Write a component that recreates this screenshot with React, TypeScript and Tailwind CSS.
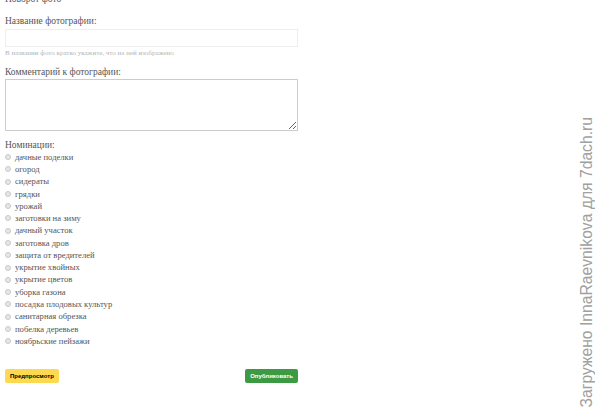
import React from 'react';

const nominations = [
  'дачные поделки',
  'огород',
  'сидераты',
  'грядки',
  'урожай',
  'заготовки на зиму',
  'дачный участок',
  'заготовка дров',
  'защита от вредителей',
  'укрытие хвойных',
  'укрытие цветов',
  'уборка газона',
  'посадка плодовых культур',
  'санитарная обрезка',
  'побелка деревьев',
  'ноябрьские пейзажи',
];

const serif = { fontFamily: '"Liberation Serif", "DejaVu Serif", serif' };
const sans = { fontFamily: '"Liberation Sans", Arial, sans-serif' };

export default function App() {
  return (
    <div className="relative w-[600px] h-[418px] overflow-hidden bg-white text-[#555]" style={serif}>
      <div className="w-[293px] ml-[5px] -mt-[7px] flex flex-col">
        <div className="text-[9.5px] leading-[12px]">Поворот фото</div>

        <label className="mt-[10px] text-[9.5px] leading-[12px]">Название фотографии:</label>
        <input className="mt-[2px] h-[18px] w-full border border-[#eeeeee] outline-none" />
        <div className="mt-[2px] text-[7px] leading-[9px] text-[#b5b5b5]">
          В названии фото кратко укажите, что на ней изображено
        </div>

        <label className="mt-[8px] text-[9.5px] leading-[12px]">Комментарий к фотографии:</label>
        <textarea className="mt-[1px] h-[52px] w-full border border-[#cccccc] outline-none resize-y" />

        <div className="mt-[8px] text-[9.5px] leading-[12px]">Номинации:</div>
        <div className="flex flex-col">
          {nominations.map((n) => (
            <label key={n} className="flex items-center h-[12.27px] text-[8.6px]">
              <span className="w-[6px] h-[6px] rounded-full border border-[#c8c8c8] bg-[#e6e6e6] mr-[4px] shrink-0" />
              <span className="leading-none">{n}</span>
            </label>
          ))}
        </div>

        <div className="mt-[22px] flex justify-between">
          <button
            className="h-[14px] px-[5px] rounded-[2px] bg-[#fdd94f] text-black text-[6px] font-bold"
            style={sans}
          >
            Предпросмотр
          </button>
          <button
            className="h-[14px] px-[5px] rounded-[2px] bg-[#3d9a44] text-white text-[6px] font-bold"
            style={sans}
          >
            Опубликовать
          </button>
        </div>
      </div>

      <div
        className="absolute right-[3px] bottom-[10px] [writing-mode:vertical-rl] rotate-180 text-[15.7px] leading-[20px] text-[#a0a0a0]"
        style={sans}
      >
        Загружено InnaRaevnikova для 7dach.ru
      </div>
    </div>
  );
}
